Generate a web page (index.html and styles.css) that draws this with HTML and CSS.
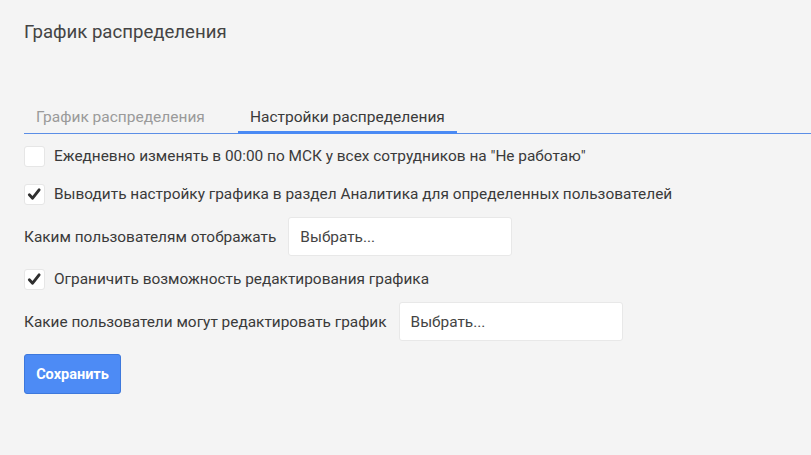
FILE: index.html
```html
<!DOCTYPE html>
<html lang="ru">
<head>
    <meta charset="UTF-8">
    <meta name="viewport" content="width=device-width, initial-scale=1.0">
    <title>График распределения</title>
    <link rel="stylesheet" href="styles.css">
</head>
<body>

<div class="page">
    <h1 class="page-title">График распределения</h1>

    <div class="tabs">
        <div class="tab">График распределения</div>
        <div class="tab tab-active">Настройки распределения</div>
    </div>

    <div class="settings">
        <label class="check-row row-first">
            <span class="checkbox"></span>
            <span>Ежедневно изменять в 00:00 по МСК у всех сотрудников на "Не работаю"</span>
        </label>

        <label class="check-row row-second">
            <span class="checkbox">
                <svg viewBox="0 0 21 21" width="21" height="21"><path d="M4.8 10.8 L8.4 14.6 L15.6 5.4" fill="none" stroke="#2f2f2f" stroke-width="3.2" stroke-linecap="round" stroke-linejoin="round"/></svg>
            </span>
            <span>Выводить настройку графика в раздел Аналитика для определенных пользователей</span>
        </label>

        <div class="field-row">
            <span class="field-label">Каким пользователям отображать</span>
            <div class="select-box">Выбрать...</div>
        </div>

        <label class="check-row row-third">
            <span class="checkbox">
                <svg viewBox="0 0 21 21" width="21" height="21"><path d="M4.8 10.8 L8.4 14.6 L15.6 5.4" fill="none" stroke="#2f2f2f" stroke-width="3.2" stroke-linecap="round" stroke-linejoin="round"/></svg>
            </span>
            <span>Ограничить возможность редактирования графика</span>
        </label>

        <div class="field-row">
            <span class="field-label">Какие пользователи могут редактировать график</span>
            <div class="select-box">Выбрать...</div>
        </div>

        <button class="save-btn">Сохранить</button>
    </div>
</div>

</body>
</html>
```

FILE: styles.css
```css
body {
    margin: 0;
    background-color: #f4f4f4;
    font-family: Roboto, "Noto Sans", sans-serif;
    color: #3a3a3a;
}

.page {
    padding: 0 0 0 24px;
}

.page-title {
    margin: 0;
    padding-top: 20px;
    font-size: 18.6px;
    line-height: 24px;
    font-weight: 400;
    color: #444;
}

/* Tabs */
.tabs {
    display: flex;
    margin-top: 62px;
    border-bottom: 1px solid #5b8ee6;
}

.tab {
    padding: 0 12px 5px 12px;
    margin-right: 21px;
    font-size: 15.5px;
    line-height: 22px;
    color: #9a9a9a;
}

.tab-active {
    color: #3a3a3a;
    border-bottom: 3px solid #4a8af4;
    margin-bottom: -1px;
    padding-bottom: 3px;
}

/* Settings form */
.settings {
    display: flex;
    flex-direction: column;
    align-items: flex-start;
    font-size: 15.4px;
}

.check-row {
    display: flex;
    align-items: center;
    gap: 9px;
    margin-top: 13px;
    line-height: 21px;
}

.row-first {
    margin-top: 12px;
}

.row-second {
    margin-top: 17px;
}

.row-third {
    margin-top: 13px;
}

.checkbox {
    width: 21px;
    height: 21px;
    box-sizing: border-box;
    background-color: #fff;
    border: 1px solid #e6e6e6;
    border-radius: 3px;
    display: flex;
    align-items: center;
    justify-content: center;
}

.checkbox svg {
    display: block;
}

.field-row {
    display: flex;
    align-items: center;
    gap: 12px;
    margin-top: 12px;
}

.select-box {
    width: 224px;
    height: 39px;
    box-sizing: border-box;
    padding-left: 11px;
    display: flex;
    align-items: center;
    background-color: #fff;
    border: 1px solid #e8e8e8;
    border-radius: 3px;
    color: #444;
}

.save-btn {
    margin-top: 13px;
    width: 97px;
    height: 40px;
    background-color: #4d8bf5;
    border: 1px solid #3d78dc;
    border-radius: 3px;
    color: #fff;
    font-family: inherit;
    font-size: 14.5px;
    font-weight: 700;
    cursor: pointer;
}
```
